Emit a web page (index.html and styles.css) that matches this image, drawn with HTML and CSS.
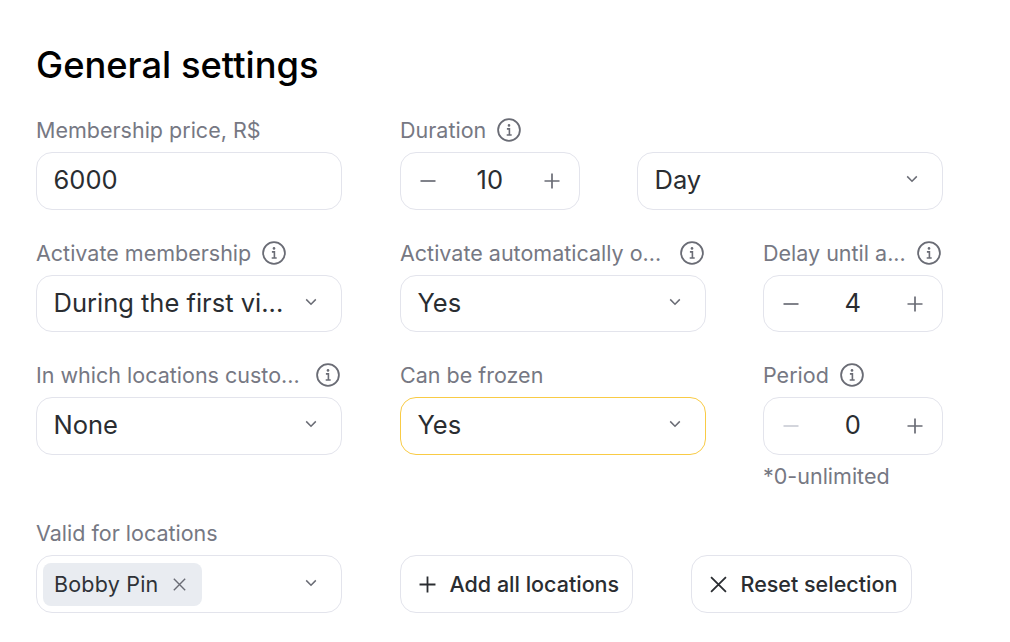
FILE: index.html
```html
<!DOCTYPE html>
<html lang="en">
<head>
<meta charset="utf-8">
<title>General settings</title>
<link rel="stylesheet" href="styles.css">
</head>
<body>
<svg class="defs" width="0" height="0" aria-hidden="true">
  <symbol id="info" viewBox="0 0 24 24"><circle cx="12" cy="12" r="10.9" fill="none" stroke="currentColor" stroke-width="1.8"/><path d="M9.9 10.9h2.5v6M9.7 17h5" fill="none" stroke="currentColor" stroke-width="1.6"/><circle cx="12" cy="7.4" r="1.3" fill="currentColor"/></symbol>
  <symbol id="chev" viewBox="0 0 12 8"><path d="M1.2 1.4 6 6.2l4.8-4.8" fill="none" stroke="currentColor" stroke-width="1.5"/></symbol>
  <symbol id="minus" viewBox="0 0 16 16"><path d="M0.5 8h15" fill="none" stroke="currentColor" stroke-width="1.7"/></symbol>
  <symbol id="plus" viewBox="0 0 16 16"><path d="M0.5 8h15M8 .5v15" fill="none" stroke="currentColor" stroke-width="1.7"/></symbol>
  <symbol id="cross" viewBox="0 0 16 16"><path d="M1 1l14 14M15 1 1 15" fill="none" stroke="currentColor" stroke-width="1.7"/></symbol>
</svg>
<main class="page">
  <h1 class="title">General settings</h1>

  <div class="row row-one">
    <div class="field wide">
      <div class="label"><span class="label-text">Membership price, R$</span></div>
      <div class="box"><span class="value">6000</span></div>
    </div>
    <div class="field narrow">
      <div class="label"><span class="label-text">Duration</span><svg class="info"><use href="#info"/></svg></div>
      <div class="box stepper"><svg class="step"><use href="#minus"/></svg><span class="count">10</span><svg class="step"><use href="#plus"/></svg></div>
    </div>
    <div class="field wide">
      <div class="label"></div>
      <div class="box"><span class="value">Day</span><svg class="chev"><use href="#chev"/></svg></div>
    </div>
  </div>

  <div class="row row-two">
    <div class="field wide">
      <div class="label"><span class="label-text">Activate membership</span><svg class="info"><use href="#info"/></svg></div>
      <div class="box"><span class="value">During the first vi...</span><svg class="chev"><use href="#chev"/></svg></div>
    </div>
    <div class="field wide">
      <div class="label"><span class="label-text">Activate automatically o...</span><svg class="info push"><use href="#info"/></svg></div>
      <div class="box"><span class="value">Yes</span><svg class="chev"><use href="#chev"/></svg></div>
    </div>
    <div class="field narrow">
      <div class="label"><span class="label-text">Delay until a...</span><svg class="info push"><use href="#info"/></svg></div>
      <div class="box stepper"><svg class="step"><use href="#minus"/></svg><span class="count">4</span><svg class="step"><use href="#plus"/></svg></div>
    </div>
  </div>

  <div class="row row-three">
    <div class="field wide">
      <div class="label"><span class="label-text">In which locations custo...</span><svg class="info push"><use href="#info"/></svg></div>
      <div class="box"><span class="value">None</span><svg class="chev"><use href="#chev"/></svg></div>
    </div>
    <div class="field wide">
      <div class="label"><span class="label-text">Can be frozen</span></div>
      <div class="box focused"><span class="value">Yes</span><svg class="chev"><use href="#chev"/></svg></div>
    </div>
    <div class="field narrow">
      <div class="label"><span class="label-text">Period</span><svg class="info"><use href="#info"/></svg></div>
      <div class="box stepper"><svg class="step disabled"><use href="#minus"/></svg><span class="count">0</span><svg class="step"><use href="#plus"/></svg></div>
      <div class="hint">*0-unlimited</div>
    </div>
  </div>

  <div class="row row-four">
    <div class="field wide">
      <div class="label"><span class="label-text">Valid for locations</span></div>
      <div class="box tags"><span class="tag">Bobby Pin<svg class="tag-x"><use href="#cross"/></svg></span><svg class="chev"><use href="#chev"/></svg></div>
    </div>
    <button class="btn add" type="button"><svg class="btn-icon"><use href="#plus"/></svg>Add all locations</button>
    <button class="btn reset" type="button"><svg class="btn-icon"><use href="#cross"/></svg>Reset selection</button>
  </div>
</main>
</body>
</html>
```
FILE: styles.css
```css
* { box-sizing: border-box; }
html, body { margin: 0; padding: 0; background: #fff; }
body { font-family: Inter, "Liberation Sans", sans-serif; overflow: hidden; }
.defs { position: absolute; }
.page { width: 1010px; height: 642px; padding: 43px 0 0 36px; }
.title { margin: 0 0 31px; font-size: 36.3px; line-height: 44px; font-weight: 450; color: #000; }
.row { display: flex; align-items: flex-start; }
.row-one { gap: 57px; margin-bottom: 31px; }
.row-two { gap: 58px; margin-bottom: 31px; }
.row-three { gap: 58px; margin-bottom: 33px; }
.row-four { align-items: flex-end; }
.row-one .narrow { margin-left: 1px; }
.field { flex: none; }
.wide { width: 306px; }
.narrow { width: 180px; }
.row-two .narrow, .row-three .narrow { margin-left: -1px; }
.label { display: flex; align-items: center; height: 24px; margin-bottom: 10px; font-size: 21.5px; line-height: 24px; color: #767883; }
.label-text { white-space: nowrap; }
.info { width: 24px; height: 24px; margin-left: 11px; color: #6a6c75; flex: none; }
.info.push { margin-left: auto; margin-right: 2px; }
.box { display: flex; align-items: center; height: 58px; padding: 0 24.5px 2px 16.5px; border: 1px solid #e3e4ec; border-radius: 16px; background: #fff; }
.row-two .box { height: 57px; }
.value { flex: 1; font-size: 25.5px; line-height: 30px; color: #2a2d31; white-space: nowrap; }
.chev { width: 12px; height: 8px; margin-top: -2px; color: #6a6c75; flex: none; }
.focused { border-color: #f9cb45; }
.stepper { justify-content: space-between; padding: 0 19px 0; }
.step { width: 16px; height: 16px; color: #6a6c75; flex: none; }
.step.disabled { color: #ccced6; }
.count { margin: -2px .5px 0 0; font-size: 25.5px; line-height: 30px; color: #2a2d31; }
.hint { margin-top: 9px; font-size: 21.5px; line-height: 24px; color: #767883; }
.tags { padding: 0 24.5px 0 6px; justify-content: space-between; }
.tag { display: flex; align-items: center; height: 43px; width: 159px; padding-left: 11px; border-radius: 8px; background: #e9ecf1; font-size: 21.5px; color: #2f3237; letter-spacing: .2px; }
.tag-x { width: 13px; height: 13px; margin-left: 15px; color: #6a6c75; }
.btn { display: flex; align-items: center; height: 58px; margin: 0; padding: 0 0 0 18px; border: 1px solid #e3e4ec; border-radius: 16px; background: #fff; font: 500 21.5px/24px Inter, "Liberation Sans", sans-serif; color: #2a2d31; white-space: nowrap; }
.add { width: 233px; margin-left: 58px; }
.reset { width: 221px; margin-left: 58px; }
.btn-icon { width: 17px; height: 17px; margin-right: 13.5px; color: #2a2d31; flex: none; }
```
